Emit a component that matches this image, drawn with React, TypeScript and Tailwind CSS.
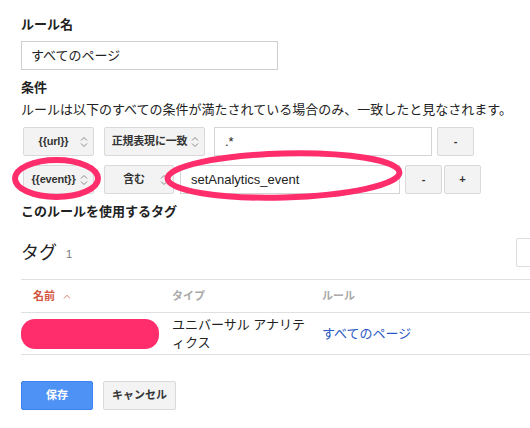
import React from "react";

function Chevrons() {
  return (
    <svg width="8" height="12" viewBox="0 0 8 12" className="shrink-0">
      <path d="M1 4.5 L4 1.5 L7 4.5" fill="none" stroke="#8a8a8a" strokeWidth="1" />
      <path d="M1 7.5 L4 10.5 L7 7.5" fill="none" stroke="#8a8a8a" strokeWidth="1" />
    </svg>
  );
}

function Select({ label, className }: { label: string; className: string }) {
  return (
    <div
      className={`flex h-[29px] items-center rounded-[2px] border border-[#d9d9d9] bg-[#f3f3f3] pl-[3px] pr-[5px] ${className}`}
    >
      <span className="flex-1 whitespace-nowrap text-center text-[11px] font-bold tracking-[-0.2px] text-[#333]">
        {label}
      </span>
      <Chevrons />
    </div>
  );
}

function SmallButton({ label, className }: { label: string; className: string }) {
  return (
    <div
      className={`flex h-[29px] w-[37px] items-center justify-center rounded-[2px] border border-[#d9d9d9] bg-[#f3f3f3] text-[11px] font-bold text-[#333] ${className}`}
    >
      {label}
    </div>
  );
}

function TextInput({ value, className }: { value: string; className: string }) {
  return (
    <div
      className={`flex h-[29px] items-center border border-[#d4d4d4] bg-white px-[10px] text-[13px] text-[#222] ${className}`}
    >
      {value}
    </div>
  );
}

export default function App() {
  return (
    <div className="relative h-[428px] w-[530px] overflow-hidden bg-white pl-[21px] pt-[16px] font-['Liberation_Sans','Noto_Sans_CJK_JP',sans-serif] text-[#222]">
      <div className="text-[13px] font-bold leading-[18px]">ルール名</div>
      <div className="mt-[7px] flex h-[29px] w-[257px] items-center border border-[#cfcfcf] px-[9px] text-[13px]">
        すべてのページ
      </div>

      <div className="mt-[9px] text-[13px] font-bold leading-[18px]">条件</div>
      <div className="mt-[4px] whitespace-nowrap text-[13px] leading-[18px]">
        ルールは以下のすべての条件が満たされている場合のみ、一致したと見なされます。
      </div>

      <div className="ml-[2px] mt-[8px] flex">
        <Select label="{{url}}" className="w-[71px]" />
        <Select label="正規表現に一致" className="ml-[10px] w-[101px]" />
        <TextInput value=".*" className="ml-[9px] w-[218px]" />
        <SmallButton label="-" className="ml-[5px]" />
      </div>

      <div className="ml-[2px] mt-[9px] flex">
        <Select label="{{event}}" className="w-[71px]" />
        <Select label="含む" className="ml-[10px] w-[70px]" />
        <TextInput value="setAnalytics_event" className="ml-[6px] w-[220px]" />
        <SmallButton label="-" className="ml-[5px]" />
        <SmallButton label="+" className="ml-[2px]" />
      </div>

      <div className="mt-[9px] text-[13px] font-bold leading-[18px]">このルールを使用するタグ</div>

      <div className="mt-[17px] flex h-[29px] items-center">
        <span className="text-[18px] leading-[24px] text-[#222]">タグ</span>
        <span className="ml-[9px] mt-[4px] text-[11px] text-[#777]">1</span>
        <div className="ml-auto mr-[-26px] h-[29px] w-[40px] shrink-0 rounded-[2px] border border-[#dcdcdc] bg-white" />
      </div>

      <div className="mt-[12px] border-t border-[#e0e0e0]">
        <div className="flex h-[33px] items-center border-b border-[#e0e0e0] text-[11px] font-bold">
          <div className="flex w-[151px] items-center pl-[12px] text-[#d2573f]">
            名前
            <svg width="8" height="5" viewBox="0 0 8 5" className="ml-[8px]">
              <path d="M1 4.5 L4 1.2 L7 4.5" fill="none" stroke="#d9826f" strokeWidth="1" />
            </svg>
          </div>
          <div className="w-[150px] text-[#aaa]">タイプ</div>
          <div className="text-[#aaa]">ルール</div>
        </div>
        <div className="flex h-[42px] items-center border-b border-[#e0e0e0]">
          <div className="w-[151px]">
            <div className="h-[30px] w-[138px] rounded-[14px] bg-[#ff2d6b]" />
          </div>
          <div className="w-[150px] pr-[10px] text-[13px] leading-[18px]">
            ユニバーサル アナリティクス
          </div>
          <div className="text-[13px] text-[#2b58c5]">すべてのページ</div>
        </div>
      </div>

      <div className="mt-[26px] flex">
        <div className="flex h-[29px] w-[72px] items-center justify-center rounded-[2px] border border-[#3c83f0] bg-[#4f92f5] text-[11px] font-bold text-white">
          保存
        </div>
        <div className="ml-[10px] flex h-[29px] w-[73px] items-center justify-center rounded-[2px] border border-[#d9d9d9] bg-[#f3f3f3] text-[11px] font-bold text-[#333]">
          キャンセル
        </div>
      </div>

      <svg className="pointer-events-none absolute left-0 top-0" width="530" height="428">
        <ellipse cx="56.5" cy="178.5" rx="41.5" ry="18.5" fill="none" stroke="#ff2d6b" strokeWidth="6" />
        <ellipse
          cx="283.5"
          cy="175.5"
          rx="116"
          ry="22"
          fill="none"
          stroke="#ff2d6b"
          strokeWidth="6"
          transform="rotate(-1.5 283.5 175.5)"
        />
      </svg>
    </div>
  );
}
